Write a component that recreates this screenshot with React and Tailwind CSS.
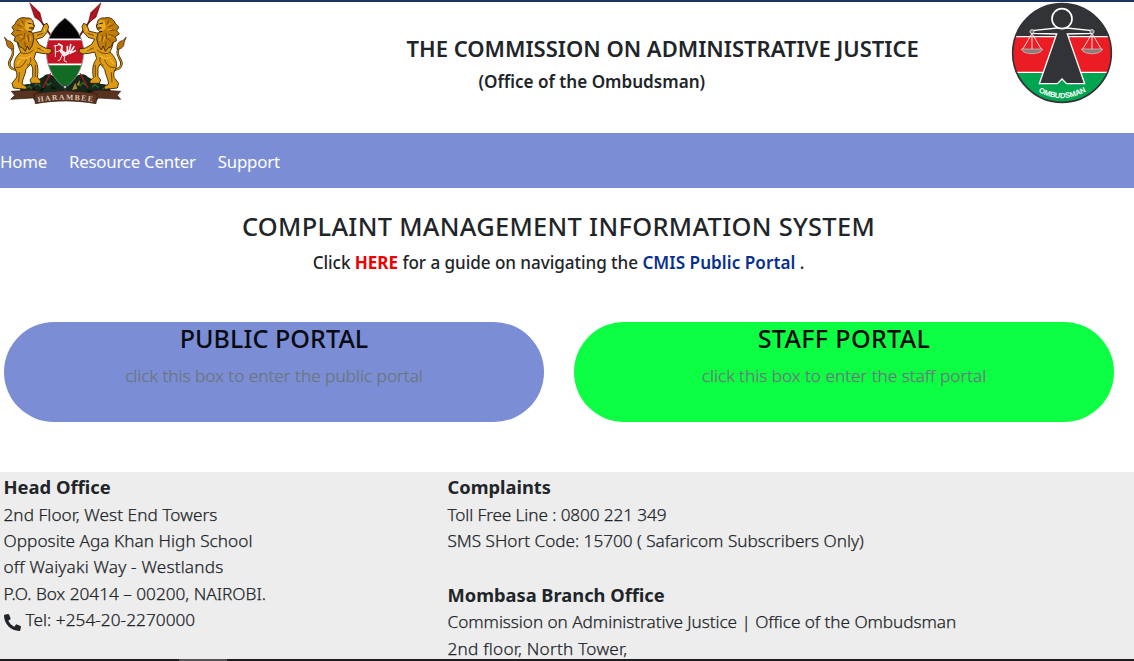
import { FaPhone } from "react-icons/fa";

function Lion() {
  return (
    <g strokeLinejoin="round" strokeLinecap="round">
      <path d="M50 210 C24 206 24 188 34 174 C42 160 40 148 32 136" fill="none" stroke="#2a1a05" strokeWidth="7" />
      <path d="M50 210 C24 206 24 188 34 174 C42 160 40 148 32 136" fill="none" stroke="#d28f10" strokeWidth="3.5" />
      <path d="M14 112 L24 122 C34 122 42 132 41 148 C30 148 18 140 20 130Z" fill="#b87308" stroke="#2a1a05" strokeWidth="2" />
      <path
        d="M52 112 C50 134 58 146 62 156 C48 170 38 186 44 204 C50 214 52 222 50 232 L36 250 L40 264 L78 268 L80 260 L66 252 C68 234 76 226 78 208 L92 192 L98 204 L98 230 L90 240 L94 250 L122 250 L122 243 L112 232 C116 208 114 192 102 176 L108 156 L124 160 L146 162 L156 154 L152 146 L136 144 L118 134 L108 118 L128 112 L142 96 L146 80 L141 70 L132 74 L124 94 L104 98Z"
        fill="#dd9a12"
        stroke="#2a1a05"
        strokeWidth="2.5"
      />
      <path
        d="M46 70 C50 56 66 50 78 54 C92 52 100 60 100 68 L103 78 L100 88 L92 94 L98 100 L102 116 L96 138 L88 150 L82 138 L76 154 L68 144 L58 140 L54 128 L42 122 L46 110 L34 102 L42 92 L36 82Z"
        fill="#c17d0a"
        stroke="#2a1a05"
        strokeWidth="2.5"
      />
      <path d="M78 62 L92 60 L102 74 L98 82 L88 82 L96 92 L84 94 L74 84Z" fill="#e9ab24" />
      <path d="M84 69 l9 2 M98 72 l4 5 M88 84 l10 0 M86 94 l8 2" fill="none" stroke="#2a1a05" strokeWidth="3" />
      <path d="M52 74 l12 6 M48 90 l14 2 M50 108 l14 -4 M60 124 l10 -10 M74 100 l-2 16 M84 106 l2 18 M66 62 l4 10 M74 126 l2 14" fill="none" stroke="#6b4006" strokeWidth="2.5" />
      <path d="M58 88 l12 2 M60 108 l8 4 M78 112 l4 12 M92 108 l0 14 M62 70 l6 6" fill="none" stroke="#f0b636" strokeWidth="2.5" />
      <path d="M62 158 C76 164 90 160 100 150 M48 202 C60 206 72 196 78 180 M82 196 C92 190 96 180 90 170 M58 218 l-2 28 M106 196 l0 34 M112 144 l20 8 M112 106 l16 -6" fill="none" stroke="#5b3705" strokeWidth="2.5" />
      <path d="M60 172 C72 178 84 174 92 168 M52 192 C54 186 58 182 62 180 M132 84 l2 10 M124 146 l14 6" fill="none" stroke="#f5bd3a" strokeWidth="3.5" />
    </g>
  );
}

function Spear() {
  return (
    <g>
      <path d="M118 56 L156 112" stroke="#3a1010" strokeWidth="5" />
      <path d="M118 56 L156 112" stroke="#a4141d" strokeWidth="3" />
      <path d="M89 8 L120 38 L127 68 L104 52Z" fill="#a90f1b" stroke="#4a0a10" strokeWidth="1.5" />
      <path d="M91 12 L124 64" stroke="#d22b38" strokeWidth="2" />
      <path d="M152 220 L128 264" stroke="#b4141d" strokeWidth="4" />
    </g>
  );
}

function CoatOfArms() {
  return (
    <svg viewBox="0 6 396 324" className="h-27 w-33 shrink-0">
      <defs>
        <clipPath id="shield">
          <path d="M195 54 C226 78 251 112 251 156 C250 206 226 242 195 263 C164 242 140 206 139 156 C139 112 164 78 195 54Z" />
        </clipPath>
      </defs>
      <path d="M60 280 C58 260 72 250 90 252 C104 236 122 240 134 226 C150 214 166 236 195 238 C224 236 240 214 258 226 C270 240 288 236 302 252 C320 250 334 260 332 280 L270 284 L195 272 L120 284Z" fill="#14281a" />
      <path d="M78 266 l10 -8 l8 8 M104 256 l10 -6 l8 10 M136 246 l8 10 l10 -8 M240 258 l8 -10 l10 8 M276 262 l8 -8 l12 8 M308 268 l8 -6" fill="none" stroke="#2f6433" strokeWidth="4" />
      <path d="M216 270 l10 -22 l6 18z M230 254 l10 -14 l-2 18z" fill="#ab8a2e" />
      <path d="M92 274 l12 -8 M122 272 l10 -8 M262 272 l12 4 M154 262 l12 4" stroke="#080f09" strokeWidth="6" />
      <Spear />
      <g transform="translate(392 0) scale(-1 1)"><Spear /></g>
      <g clipPath="url(#shield)">
        <rect x="136" y="50" width="120" height="68" fill="#050505" />
        <rect x="136" y="118" width="120" height="74" fill="#c41425" />
        <rect x="136" y="192" width="120" height="76" fill="#116b22" />
        <path d="M136 118 H256 M136 193 H256" stroke="#fff" strokeWidth="5" />
      </g>
      <path d="M195 54 C226 78 251 112 251 156 C250 206 226 242 195 263 C164 242 140 206 139 156 C139 112 164 78 195 54Z" fill="none" stroke="#8a8a8a" strokeWidth="2.5" />
      <g fill="none" stroke="#f6eeee" strokeLinecap="round" strokeLinejoin="round">
        <path d="M176 132 L186 138 L184 152 L196 160 L206 154" strokeWidth="6" />
        <path d="M182 152 L192 166 L204 160" strokeWidth="8" />
        <path d="M202 156 L202 140 M208 154 L212 134 M212 156 L222 140 M210 160 L226 152" strokeWidth="5" />
        <path d="M186 166 L180 180 L174 182 M194 170 L192 182 L200 186 M166 136 L166 170 M162 138 L174 136 M178 152 L168 156" strokeWidth="3" />
      </g>
      <Lion />
      <g transform="translate(392 0) scale(-1 1)"><Lion /></g>
      <circle cx="195" cy="261" r="5" fill="#bbb" stroke="#222" strokeWidth="2" />
      <path d="M34 274 L96 270 C112 272 122 282 138 280 L256 280 C274 280 282 270 298 270 L362 274 L352 286 L362 298 L296 294 L282 308 C224 294 168 294 112 308 L98 294 L32 298 L44 286Z" fill="#583320" stroke="#2c170d" strokeWidth="2" />
      <path d="M102 282 C164 270 230 270 292 282 L288 311 C224 300 168 300 106 311Z" fill="#5e3523" stroke="#2c170d" strokeWidth="2" />
      <path id="motto" d="M114 306 C168 297 226 297 282 306" fill="none" />
      <text className="fill-[#d9c6b6] font-['Liberation_Serif',serif] text-[23px] font-bold">
        <textPath href="#motto" textLength="164">HARAMBEE</textPath>
      </text>
    </svg>
  );
}

function Scale() {
  return (
    <g>
      <path d="M84 100 L56 148 M84 100 L112 148 M84 100 V148" stroke="#f3dada" strokeWidth="3" />
      <path d="M52 147 H116 C112 166 56 166 52 147Z" fill="#8f7e7c" stroke="#d9c2c0" strokeWidth="2" />
      <circle cx="84" cy="95" r="6" fill="#777" stroke="#ddd" strokeWidth="3" />
    </g>
  );
}

function OmbudsmanSeal() {
  return (
    <svg viewBox="0 6 390 324" className="h-27 w-[130px] shrink-0">
      <defs>
        <clipPath id="seal"><circle cx="174" cy="159" r="148" /></clipPath>
      </defs>
      <g clipPath="url(#seal)">
        <rect x="20" y="6" width="310" height="104" fill="#323337" />
        <rect x="20" y="108" width="310" height="110" fill="#ec1c24" />
        <rect x="20" y="216" width="310" height="100" fill="#00a551" />
        <path d="M20 110 H330 M20 217 H330" stroke="#fff" strokeWidth="4" />
      </g>
      <circle cx="174" cy="159" r="148" fill="none" stroke="#323337" strokeWidth="5" />
      <path d="M84 92 L160 84 H188 L264 92 V100 L190 102 L242 251 H188 L174 237 L160 251 H106 L158 102 L84 100Z" fill="#323337" stroke="#fff" strokeWidth="4" />
      <circle cx="174" cy="56" r="30" fill="#323337" stroke="#fff" strokeWidth="5" />
      <Scale />
      <g transform="translate(180 0)"><Scale /></g>
      <path id="sealName" d="M103 276 Q174 314 247 274" fill="none" />
      <text className="fill-white font-['Liberation_Sans',sans-serif] text-[23px] font-bold">
        <textPath href="#sealName" textLength="150">OMBUDSMAN</textPath>
      </text>
    </svg>
  );
}

function PortalCard({ title, hint, className, titleClassName }) {
  return (
    <a href="#" className={`flex h-25 w-[540px] flex-col items-center rounded-full whitespace-nowrap ${className}`}>
      <h3 className={`text-[25.1px] leading-8 font-medium text-[#080a12] ${titleClassName}`}>{title}</h3>
      <p className="mt-[9px] text-[17.2px] leading-[26px] font-light text-[#6c757d] [-webkit-text-stroke:0.25px]">{hint}</p>
    </a>
  );
}

export default function App() {
  return (
    <div className="flex h-[661px] flex-col overflow-hidden bg-white font-['Noto_Sans','Open_Sans',sans-serif] whitespace-nowrap text-[#212529]">
      <div className="h-[2px] shrink-0 bg-[#1d3460]" />
      <header className="flex h-[131px] shrink-0 items-start">
        <CoatOfArms />
        <div className="flex-1 pt-[30px] pl-[274.5px]">
          <h1 className="text-[22px] leading-8 font-semibold">THE COMMISSION ON ADMINISTRATIVE JUSTICE</h1>
          <p className="mt-[5px] pl-[72px] text-[17.1px] leading-[26px] font-semibold">(Office of the Ombudsman)</p>
        </div>
        <OmbudsmanSeal />
      </header>

      <nav className="flex h-[55px] shrink-0 items-center gap-[22px] bg-[#7b8ed5] pt-0.5 text-[16.8px] leading-[26px] tracking-[-0.2px] text-white">
        <a href="#">Home</a>
        <a href="#">Resource Center</a>
        <a href="#">Support</a>
      </nav>

      <main className="flex h-[284px] shrink-0 flex-col pt-[22px]">
        <div className="w-[1117px] text-center">
          <h2 className="text-[25.4px] leading-8 font-medium tracking-[0.32px]">COMPLAINT MANAGEMENT INFORMATION SYSTEM</h2>
          <p className="mt-2 text-[17.1px] leading-[26px] font-medium tracking-[-0.06px]">
            Click <a href="#" className="font-bold text-[#ee0000]">HERE</a> for a guide on navigating the{" "}
            <a href="#" className="font-semibold tracking-[0.05px] text-[#062f8f]">CMIS Public Portal</a> .
          </p>
        </div>
        <div className="mt-[46px] flex gap-[30px] pl-1">
          <PortalCard title="PUBLIC PORTAL" hint="click this box to enter the public portal" className="bg-[#7b8ed5]" titleClassName="tracking-[0.05px]" />
          <PortalCard title="STAFF PORTAL" hint="click this box to enter the staff portal" className="bg-[#0cff42]" titleClassName="tracking-[0.32px]" />
        </div>
      </main>

      <footer className="flex min-h-0 flex-1 overflow-hidden bg-[#ededed] pt-0.5 pl-[3.5px] text-[17.2px] leading-[26.4px] font-light">
        <section className="w-[444px] shrink-0">
          <h4 className="mb-[1.6px] text-[18.4px] leading-[26px] font-bold">Head Office</h4>
          <div className="[-webkit-text-stroke:0.25px]">
            <p className="tracking-[0.06px]">2nd Floor, West End Towers</p>
            <p className="tracking-[0.03px]">Opposite Aga Khan High School</p>
            <p className="tracking-[0.18px]">off Waiyaki Way - Westlands</p>
            <p>P.O. Box 20414 – 00200, NAIROBI.</p>
            <p className="flex items-center gap-[5px] tracking-[0.05px]">
              <FaPhone className="mt-1 size-[17px] -scale-x-100" />
              Tel: +254-20-2270000
            </p>
          </div>
        </section>
        <section>
          <h4 className="mb-[1.6px] text-[18.3px] leading-[26px] font-bold">Complaints</h4>
          <div className="[-webkit-text-stroke:0.25px]">
            <p className="tracking-[-0.1px]">Toll Free Line : 0800 221 349</p>
            <p className="tracking-[-0.03px]">SMS SHort Code: 15700 ( Safaricom Subscribers Only)</p>
          </div>
          <h4 className="mt-[27.4px] mb-[1.6px] text-[18.3px] leading-[26px] font-bold">Mombasa Branch Office</h4>
          <div className="[-webkit-text-stroke:0.25px]">
            <p className="tracking-[-0.05px]">Commission on Administrative Justice | Office of the Ombudsman</p>
            <p className="tracking-[0.23px]">2nd floor, North Tower,</p>
          </div>
        </section>
      </footer>
      <div className="h-[2px] shrink-0 bg-[#1f1c21] pl-[179px]">
        <div className="h-full w-12 bg-[#555358]" />
      </div>
    </div>
  );
}
